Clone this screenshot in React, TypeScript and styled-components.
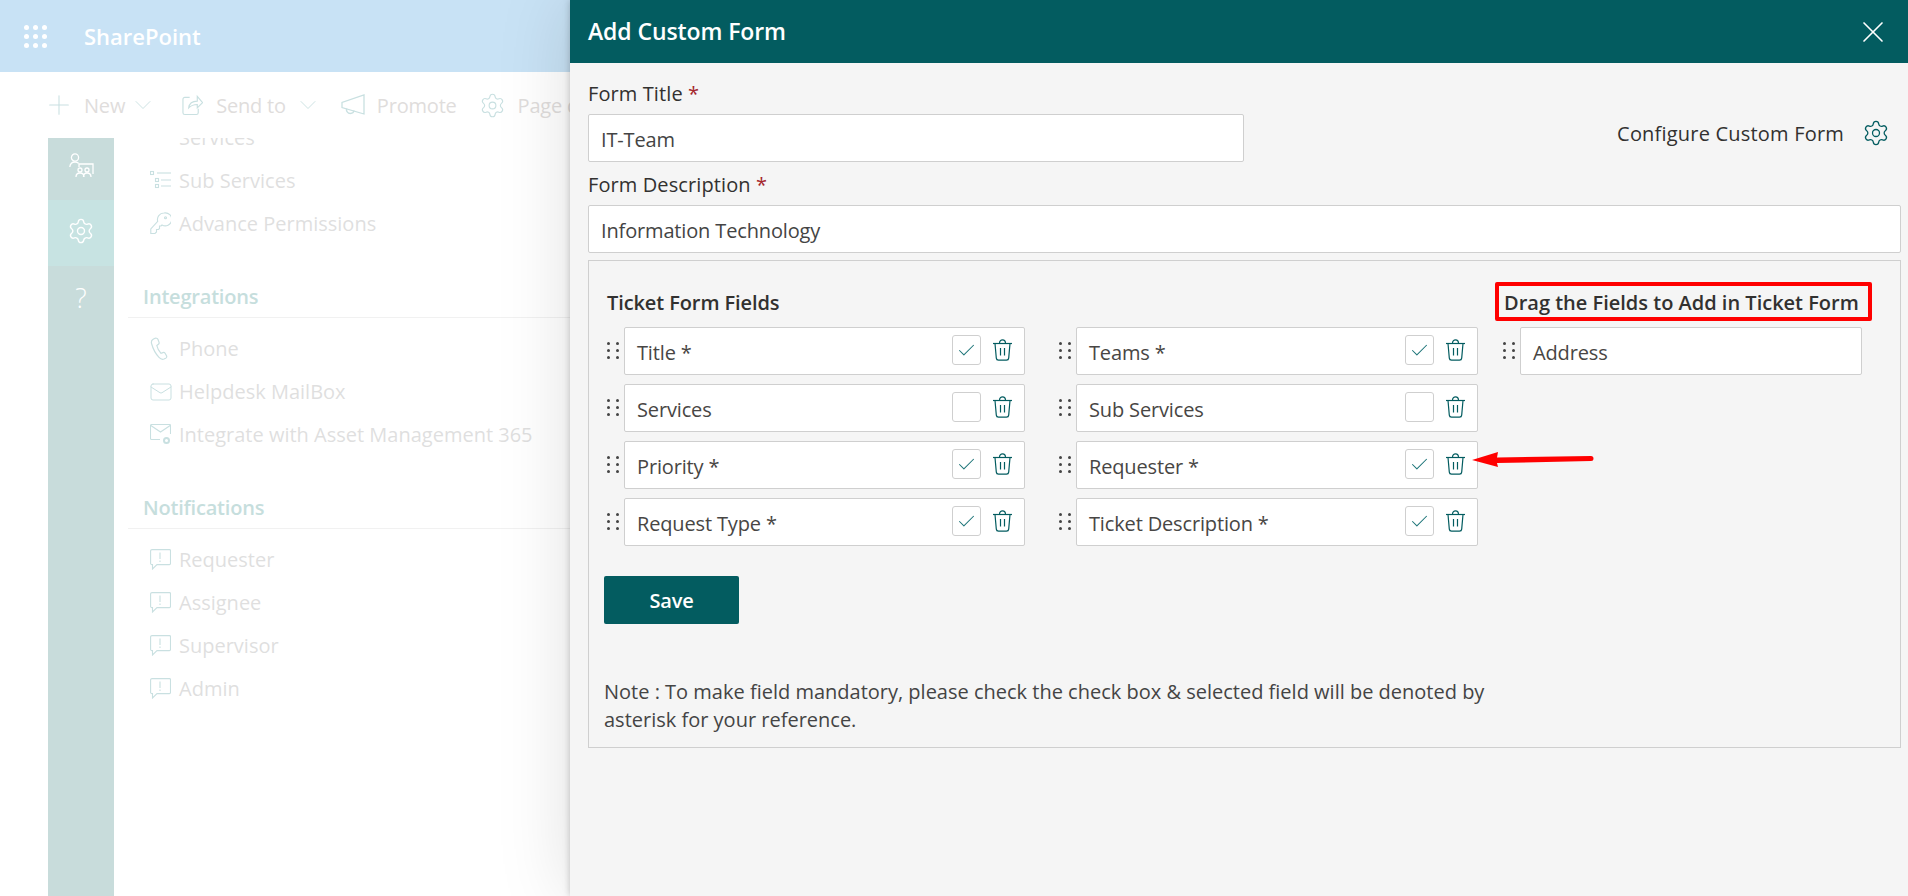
import React from "react";
import styled, { createGlobalStyle } from "styled-components";
import { Check, ChevronDown, Mail, Plus, Settings, X } from "lucide-react";

const GlobalStyle = createGlobalStyle`
  html, body {
    margin: 0;
    padding: 0;
    height: 100%;
    overflow: hidden;
    background: #fff;
    font-family: "Open Sans", "Liberation Sans", sans-serif;
  }
  * { box-sizing: border-box; }
`;

const Page = styled.div`
  position: relative;
  width: 1908px;
  height: 896px;
  overflow: hidden;
  display: flex;
  flex-direction: column;
  background: #fff;
`;

const SuiteBar = styled.div`
  height: 72px;
  flex: none;
  background: #c8e2f5;
  display: flex;
  align-items: center;
  padding-left: 24px;
  gap: 37px;
`;

const Waffle = styled.div`
  width: 23px;
  display: grid;
  grid-template-columns: repeat(3, 5px);
  grid-auto-rows: 5px;
  justify-content: space-between;
  row-gap: 4px;
  span {
    background: #fff;
    border-radius: 50%;
  }
`;

const SuiteName = styled.div`
  color: #fff;
  font-size: 22px;
  font-weight: 600;
`;

const CommandBar = styled.div`
  width: 570px;
  height: 66px;
  flex: none;
  overflow: hidden;
  display: flex;
  align-items: center;
  padding-left: 43px;
  white-space: nowrap;
`;

const Command = styled.div<{ $gap: number; $after: number }>`
  display: flex;
  align-items: center;
  gap: ${(p) => p.$gap}px;
  margin-right: ${(p) => p.$after}px;
  color: #dfdddc;
  font-size: 20px;
  letter-spacing: -0.2px;
  svg { color: #c9e0e1; flex: none; }
`;

const Caret = styled(ChevronDown)`
  margin-left: -5px;
`;

const Below = styled.div`
  flex: 1;
  display: flex;
  min-height: 0;
  padding-left: 48px;
`;

const Rail = styled.div`
  width: 66px;
  flex: none;
  background: #c8dcdb;
  display: flex;
  flex-direction: column;
`;

const RailTile = styled.div<{ $active?: boolean; $lift?: number }>`
  height: ${(p) => (p.$active ? 66 : 62)}px;
  padding-bottom: ${(p) => p.$lift ?? 0}px;
  display: flex;
  align-items: center;
  justify-content: center;
  color: #fff;
  background: ${(p) => (p.$active ? "#c7e3e2" : "transparent")};
`;

const RailQuestion = styled(RailTile)`
  font-size: 27px;
  font-weight: 300;
`;

const Menu = styled.div`
  flex: 1;
  overflow: hidden;
  padding-left: 14px;
`;

const MenuScroll = styled.div`
  margin-top: -22px;
  display: flex;
  flex-direction: column;
`;

const MenuItem = styled.div`
  height: 43px;
  display: flex;
  align-items: center;
  gap: 8px;
  padding-left: 22px;
  color: #dfdfdf;
  font-size: 20px;
  white-space: nowrap;
  svg { color: #c9e0e1; flex: none; }
`;

const MailIcon = styled(Mail)`
  margin: 0 -2px 0 -1px;
`;

const MenuHeading = styled.div<{ $top: number }>`
  height: 42px;
  margin-top: ${(p) => p.$top}px;
  margin-bottom: 9px;
  padding-left: 15px;
  display: flex;
  align-items: center;
  color: #c6dedd;
  font-size: 20px;
  font-weight: 600;
  letter-spacing: -0.2px;
  border-bottom: 1px solid #f1f1f1;
`;

const Panel = styled.div`
  position: absolute;
  top: 0;
  left: 570px;
  width: 1338px;
  height: 896px;
  background: #f5f5f5;
  box-shadow: 0 0 7px rgba(0, 0, 0, 0.22), 0 0 70px rgba(0, 0, 0, 0.13);
  display: flex;
  flex-direction: column;
`;

const PanelHeader = styled.div`
  height: 63px;
  flex: none;
  background: #035c60;
  color: #fff;
  display: flex;
  align-items: center;
  justify-content: space-between;
  padding: 0 17px 0 18px;
`;

const PanelTitle = styled.div`
  font-size: 23px;
  font-weight: 600;
  letter-spacing: -0.1px;
  margin-top: -2px;
`;

const PanelBody = styled.div`
  padding: 16px 7px 0 18px;
`;

const TopRow = styled.div`
  display: flex;
  justify-content: space-between;
`;

const FormGroup = styled.div<{ $width?: number }>`
  width: ${(p) => (p.$width ? `${p.$width}px` : "auto")};
  margin-bottom: 8px;
`;

const Label = styled.div`
  height: 28px;
  margin-bottom: 7px;
  padding-top: 1px;
  line-height: 28px;
  color: #323130;
  font-size: 20px;
  font-weight: 500;
  letter-spacing: 0.1px;
  em {
    font-style: normal;
    color: #a4262c;
  }
`;

const TextInput = styled.div`
  height: 48px;
  background: #fff;
  border: 1px solid #cfcfcf;
  border-radius: 2px;
  display: flex;
  align-items: center;
  padding: 2px 0 0 12px;
  color: #444;
  font-size: 20px;
  letter-spacing: -0.15px;
`;

const Configure = styled.div`
  display: flex;
  align-items: center;
  gap: 18px;
  padding-right: 11px;
  margin-top: 17px;
  color: #323130;
  font-size: 20px;
  font-weight: 500;
  letter-spacing: 0.2px;
  svg { color: #035c60; }
`;

const FieldsBox = styled.div`
  position: relative;
  margin-top: -1px;
  height: 488px;
  border: 1px solid #cfcfcf;
  padding: 21px 0 0 18px;
`;

const Columns = styled.div`
  display: flex;
  height: 264px;
`;

const SelectedFields = styled.div`
  width: 896px;
  flex: none;
`;

const AvailableFields = styled.div`
  flex: none;
`;

const Heading = styled.div`
  height: 39px;
  margin-bottom: 6px;
  padding-top: 1px;
  display: flex;
  align-items: center;
  color: #323130;
  font-size: 20px;
  font-weight: 560;
  letter-spacing: -0.1px;
`;

const BoxedHeading = styled(Heading)`
  width: 377px;
  margin-left: -8px;
  padding-left: 5px;
  border: 4px solid #f00;
  border-radius: 2px;
  white-space: nowrap;
  letter-spacing: 0;
`;

const FieldGrid = styled.div`
  display: grid;
  grid-template-columns: 418px 418px;
  column-gap: 34px;
  row-gap: 9px;
`;

const FieldRow = styled.div`
  display: flex;
  align-items: center;
  gap: 5px;
`;

const Grip = styled.div`
  width: 12px;
  flex: none;
  display: grid;
  grid-template-columns: 3px 3px;
  grid-auto-rows: 3px;
  justify-content: space-between;
  row-gap: 4px;
  margin-top: -1px;
  span {
    background: #444;
    border-radius: 50%;
  }
`;

const FieldBox = styled.div<{ $width: number }>`
  width: ${(p) => p.$width}px;
  flex: none;
  height: 48px;
  background: #fff;
  border: 1px solid #cfcfcf;
  border-radius: 2px;
  display: flex;
  align-items: center;
  padding: 0 12px;
  color: #484644;
  font-size: 20px;
  letter-spacing: -0.15px;
`;

const FieldName = styled.div`
  flex: 1;
  padding-top: 2px;
`;

const CheckBox = styled.div`
  width: 29px;
  height: 30px;
  flex: none;
  background: #fff;
  border: 1px solid #cfcfcf;
  border-radius: 3px;
  display: flex;
  align-items: center;
  justify-content: center;
  margin-top: -2px;
  color: #1c7478;
`;

const TrashButton = styled.div`
  width: 19px;
  height: 22px;
  flex: none;
  margin-left: 12px;
  margin-top: -3px;
  color: #035c60;
`;

const SaveButton = styled.div`
  width: 135px;
  height: 48px;
  margin-left: -3px;
  margin-top: 30px;
  background: #035c60;
  border-radius: 2px;
  color: #fff;
  font-size: 20px;
  font-weight: 600;
  letter-spacing: -0.2px;
  display: flex;
  align-items: center;
  justify-content: center;
`;

const Note = styled.div`
  width: 890px;
  margin-left: -3px;
  margin-top: 54px;
  color: #444;
  font-size: 20px;
  line-height: 28px;
`;

const ArrowMark = styled.svg`
  position: absolute;
  left: 883px;
  top: 190px;
`;

const rows: [string, boolean, string, boolean][] = [
  ["Title *", true, "Teams *", true],
  ["Services", false, "Sub Services", false],
  ["Priority *", true, "Requester *", true],
  ["Request Type *", true, "Ticket Description *", true],
];

const Dots: React.FC<{ count: number }> = ({ count }) => (
  <>
    {Array.from({ length: count }).map((_, i) => (
      <span key={i} />
    ))}
  </>
);

const TrashIcon: React.FC = () => (
  <svg width="19" height="22" viewBox="0 0 19 22" fill="none" stroke="currentColor" strokeWidth="1.2">
    <path d="M0 4.5h19" />
    <path d="M6.5 4.300C6.500 2 8 .8 9.500.8s3 1.200 3 3.500" />
    <path d="M2 4.500l1.300 14.600c.1 1.200 1 2 2.200 2h8c1.200 0 2.100-.8 2.200-2L17 4.500" />
    <path d="M7.500 9v7.500M11.500 9v7.500" />
  </svg>
);

const TeamIcon: React.FC = () => (
  <svg width="25" height="25" viewBox="0 0 25 25" fill="none" stroke="currentColor" strokeWidth="1.3">
    <circle cx="6" cy="4.500" r="3.600" />
    <path d="M.8 14c.3-3 2.400-5 5.200-5 1.500 0 2.800.5 3.800 1.500" />
    <path d="M10 11h14v10" />
    <path d="M10 11v3" />
    <circle cx="11" cy="17" r="2" />
    <circle cx="18" cy="17" r="2" />
    <path d="M7 24c0-2.500 1.500-4 4-4s4 1.500 4 4M14.500 24c0-2.500 1-4 3.500-4s4 1.500 4 4" />
  </svg>
);

const ListIcon: React.FC<{ small?: boolean }> = ({ small }) => (
  <svg width="21" height="21" viewBox="0 0 21 21" fill="none" stroke="currentColor" strokeWidth="1.1">
    <rect x="0.5" y="1.500" width="3" height="3" />
    <path d="M7 3h14" />
    {!small && <rect x="5.500" y="8.500" width="3" height="3" />}
    {!small && <rect x="5.500" y="14.500" width="3" height="3" />}
    {!small && <path d="M11 10h10M11 16h10" />}
  </svg>
);

const KeyIcon: React.FC = () => (
  <svg width="21" height="23" viewBox="0 0 21 23" fill="none" stroke="currentColor" strokeWidth="1.1">
    <path d="M14 1a6.500 6.500 0 0 0-6.300 8.300L.8 17v4.500h4.200l1.500-1.500v-2.500h2l1-1v-2.500h1.500l1-1A6.500 6.500 0 1 0 14 1z" />
    <circle cx="15.500" cy="5.800" r="1" />
  </svg>
);

const PhoneIcon: React.FC = () => (
  <svg width="21" height="24" viewBox="0 0 21 24" fill="none" stroke="currentColor" strokeWidth="1.2">
    <path d="M4.500 1.500L2.800 2.600C1.500 3.500 1 5 1.700 7c1.300 4.800 4 9.800 7.300 13.400 1.600 1.700 3.300 2.300 5 1.600l1.700-.8c1-.5 1.300-1.500.8-2.400l-1.400-2.500c-.5-.8-1.300-1-2.200-.7l-1.900.7C8.700 13.800 7.300 11 6.800 8.500l1.600-1.200c.7-.6.9-1.400.6-2.200L8 2.500c-.5-1.200-2.300-1.800-3.500-1z" />
  </svg>
);

const MailGearIcon: React.FC = () => (
  <svg width="21" height="21" viewBox="0 0 21 21" fill="none" stroke="currentColor" strokeWidth="1.1">
    <path d="M10 15.500H1.500a1 1 0 0 1-1-1V1.500a1 1 0 0 1 1-1h18a1 1 0 0 1 1 1V10" />
    <path d="M.8 1.500l9.700 6.500 9.700-6.500" />
    <circle cx="16.500" cy="16.500" r="2.500" strokeWidth="2" />
  </svg>
);

const AlertChatIcon: React.FC = () => (
  <svg width="21" height="21" viewBox="0 0 21 21" fill="none" stroke="currentColor" strokeWidth="1.1">
    <path d="M2 .6h17.500a1 1 0 0 1 1 1v13a1 1 0 0 1-1 1H7L2.500 20v-4.400H2a1.400 1.400 0 0 1-1.400-1V2A1.400 1.400 0 0 1 2 .6z" />
    <path d="M10 3.500v6.500M10 11.500v1.500" />
  </svg>
);

const SendIcon: React.FC = () => (
  <svg width="21" height="24" viewBox="0 0 22 24" fill="none" stroke="currentColor" strokeWidth="1.200">
    <path d="M8 4H3a2 2 0 0 0-2 2v14a2 2 0 0 0 2 2h12a2 2 0 0 0 2-2v-4" />
    <path d="M7 15c.6-4.500 4-7 9-7V3l5.500 6.500L16 15v-3.500c-4 0-6.500 1-9 3.500z" />
  </svg>
);

const PromoteIcon: React.FC = () => (
  <svg width="24" height="24" viewBox="0 0 24 24" fill="none" stroke="currentColor" strokeWidth="1.3">
    <path d="M23 2v19L1 14.500V9.500z" />
    <path d="M5.500 15.500c-.4 2.500 1 5 3.800 5 2 0 3.500-1.300 3.700-3" />
  </svg>
);

const App: React.FC = () => {
  return (
    <Page>
      <GlobalStyle />
      <SuiteBar>
        <Waffle>
          <Dots count={9} />
        </Waffle>
        <SuiteName>SharePoint</SuiteName>
      </SuiteBar>
      <CommandBar>
        <Command $gap={9} $after={25}>
          <Plus size={32} strokeWidth={0.8} />
          New
          <Caret size={28} strokeWidth={0.8} />
        </Command>
        <Command $gap={13} $after={19}>
          <SendIcon />
          Send to
          <Caret size={28} strokeWidth={0.8} />
        </Command>
        <Command $gap={12} $after={22}>
          <PromoteIcon />
          Promote
        </Command>
        <Command $gap={12} $after={0}>
          <Settings size={27} strokeWidth={1} />
          Page details
        </Command>
      </CommandBar>
      <Below>
        <Rail>
          <RailTile $lift={8}>
            <TeamIcon />
          </RailTile>
          <RailTile $active $lift={4}>
            <Settings size={28} strokeWidth={1.2} />
          </RailTile>
          <RailQuestion>?</RailQuestion>
        </Rail>
        <Menu>
          <MenuScroll>
            <MenuItem>
              <ListIcon small />
              Services
            </MenuItem>
            <MenuItem>
              <ListIcon />
              Sub Services
            </MenuItem>
            <MenuItem>
              <KeyIcon />
              Advance Permissions
            </MenuItem>
            <MenuHeading $top={31}>Integrations</MenuHeading>
            <MenuItem>
              <PhoneIcon />
              Phone
            </MenuItem>
            <MenuItem>
              <MailIcon size={24} strokeWidth={1} />
              Helpdesk MailBox
            </MenuItem>
            <MenuItem>
              <MailGearIcon />
              Integrate with Asset Management 365
            </MenuItem>
            <MenuHeading $top={31}>Notifications</MenuHeading>
            <MenuItem>
              <AlertChatIcon />
              Requester
            </MenuItem>
            <MenuItem>
              <AlertChatIcon />
              Assignee
            </MenuItem>
            <MenuItem>
              <AlertChatIcon />
              Supervisor
            </MenuItem>
            <MenuItem>
              <AlertChatIcon />
              Admin
            </MenuItem>
          </MenuScroll>
        </Menu>
      </Below>

      <Panel>
        <PanelHeader>
          <PanelTitle>Add Custom Form</PanelTitle>
          <X size={36} strokeWidth={1.1} />
        </PanelHeader>
        <PanelBody>
          <TopRow>
            <FormGroup $width={656}>
              <Label>
                Form Title <em>*</em>
              </Label>
              <TextInput>IT-Team</TextInput>
            </FormGroup>
            <Configure>
              Configure Custom Form
              <Settings size={28} strokeWidth={1.1} />
            </Configure>
          </TopRow>
          <FormGroup>
            <Label>
              Form Description <em>*</em>
            </Label>
            <TextInput>Information Technology</TextInput>
          </FormGroup>
          <FieldsBox>
            <Columns>
              <SelectedFields>
                <Heading>Ticket Form Fields</Heading>
                <FieldGrid>
                  {rows.map((r) => (
                    <React.Fragment key={r[0]}>
                      <FieldRow>
                        <Grip>
                          <Dots count={6} />
                        </Grip>
                        <FieldBox $width={401}>
                          <FieldName>{r[0]}</FieldName>
                          <CheckBox>{r[1] && <Check size={21} strokeWidth={1.2} />}</CheckBox>
                          <TrashButton>
                            <TrashIcon />
                          </TrashButton>
                        </FieldBox>
                      </FieldRow>
                      <FieldRow>
                        <Grip>
                          <Dots count={6} />
                        </Grip>
                        <FieldBox $width={402}>
                          <FieldName>{r[2]}</FieldName>
                          <CheckBox>{r[3] && <Check size={21} strokeWidth={1.2} />}</CheckBox>
                          <TrashButton>
                            <TrashIcon />
                          </TrashButton>
                        </FieldBox>
                      </FieldRow>
                    </React.Fragment>
                  ))}
                </FieldGrid>
              </SelectedFields>
              <AvailableFields>
                <BoxedHeading>Drag the Fields to Add in Ticket Form</BoxedHeading>
                <FieldRow>
                  <Grip>
                    <Dots count={6} />
                  </Grip>
                  <FieldBox $width={342}>
                    <FieldName>Address</FieldName>
                  </FieldBox>
                </FieldRow>
              </AvailableFields>
            </Columns>
            <SaveButton>Save</SaveButton>
            <Note>
              Note : To make field mandatory, please check the check box &amp; selected field will be denoted by asterisk
              for your reference.
            </Note>
            <ArrowMark width="122" height="18" viewBox="0 0 122 18">
              <path d="M0 9 L26 1 L25 6.500 L119 5 a2.500 2.500 0 0 1 0 5 L25 12 L26 16 Z" fill="#f00" />
            </ArrowMark>
          </FieldsBox>
        </PanelBody>
      </Panel>
    </Page>
  );
};

export default App;
